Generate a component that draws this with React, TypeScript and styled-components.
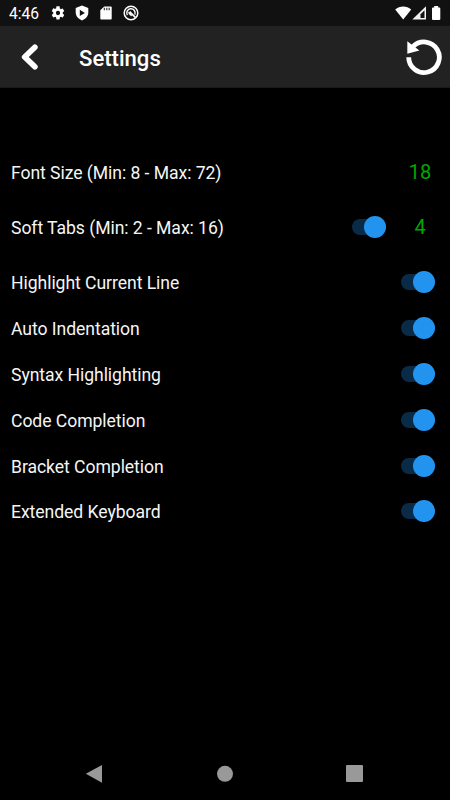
import React, { useState } from "react";
import styled, { createGlobalStyle } from "styled-components";

const GlobalStyle = createGlobalStyle`
  * { box-sizing: border-box; }
  html, body { margin: 0; background: #000; }
  body { font-family: Roboto, "Liberation Sans", sans-serif; overflow: hidden; }
`;

const Screen = styled.div`
  display: flex;
  flex-direction: column;
  width: 450px;
  height: 800px;
  background: #000;
  color: #f5f5f5;
`;

const StatusBar = styled.div`
  display: flex;
  align-items: center;
  height: 26px;
  padding: 0 5px 0 9px;
  background: #111;
  color: #fff;
`;

const Clock = styled.span`
  width: 41px;
  padding-top: 2px;
  font-size: 15.6px;
  line-height: 24px;
`;

const StatusIcons = styled.div`
  display: flex;
  align-items: center;
  gap: 8.2px;
`;

const SystemIcons = styled(StatusIcons)`
  margin-left: auto;
  gap: 0;
`;

const Header = styled.header`
  display: flex;
  align-items: center;
  height: 62px;
  padding: 0 8px 0 20px;
  background: #222;
  border-bottom: 1px solid #1a1a1a;
`;

const IconButton = styled.button`
  display: flex;
  padding: 0;
  border: 0;
  background: none;
  color: #fff;
`;

const Title = styled.h1`
  flex: 1;
  margin: 2px 0 0 39px;
  font-size: 22.1px;
  font-weight: 500;
  line-height: 28px;
  color: #fff;
`;

const SettingsList = styled.main`
  flex: 1;
  padding: 57px 15px 0 11px;
`;

const Row = styled.div<{ $tall?: boolean }>`
  display: flex;
  align-items: center;
  height: ${(p) => (p.$tall ? "55px" : "45.8px")};
  padding-bottom: ${(p) => (p.$tall ? "1px" : "0")};
`;

const SwitchGroup = styled.section`
  padding-top: 4.5px;
`;

const Label = styled.span`
  flex: 1;
  padding-top: 2px;
  font-size: 17.6px;
  line-height: 24px;
  letter-spacing: -0.06px;
`;

const NumberValue = styled.span`
  width: 30px;
  margin-left: 19px;
  text-align: center;
  font-size: 20px;
  line-height: 24px;
  color: #00a800;
`;

const Track = styled.button<{ $on: boolean }>`
  display: flex;
  align-items: center;
  justify-content: ${(p) => (p.$on ? "flex-end" : "flex-start")};
  width: 34px;
  height: 16px;
  padding: 0;
  border: 0;
  border-radius: 8px;
  background: ${(p) => (p.$on ? "#0a2b47" : "#333")};
`;

const Thumb = styled.span<{ $on: boolean }>`
  flex: none;
  width: 22px;
  height: 22px;
  border-radius: 50%;
  background: ${(p) => (p.$on ? "#2294f0" : "#aaa")};
`;

const NavBar = styled.nav`
  display: flex;
  justify-content: space-between;
  height: 53px;
  padding: 13px 86px 0 85px;
`;

function Toggle({ label }: { label: string }) {
  const [on, setOn] = useState(true);
  return (
    <Track $on={on} role="switch" aria-checked={on} aria-label={label} onClick={() => setOn(!on)}>
      <Thumb $on={on} />
    </Track>
  );
}

const GearIcon = () => (
  <svg width="16" height="16" viewBox="0 0 24 24" fill="#fff">
    <path d="M19.14 12.94c.04-.3.06-.61.06-.94s-.02-.64-.07-.94l2.03-1.58a.5.5 0 0 0 .12-.61l-1.92-3.32a.5.5 0 0 0-.59-.22l-2.39.96a7 7 0 0 0-1.62-.94l-.36-2.54A.48.48 0 0 0 13.92 2h-3.84c-.24 0-.43.17-.47.41l-.36 2.54c-.59.24-1.13.57-1.62.94l-2.39-.96a.5.5 0 0 0-.59.22L2.74 8.87c-.12.21-.08.47.12.61l2.03 1.58A6 6 0 0 0 4.8 12c0 .31.02.64.07.94l-2.03 1.58a.5.5 0 0 0-.12.61l1.92 3.32c.12.22.37.29.59.22l2.39-.96c.5.38 1.03.7 1.62.94l.36 2.54c.05.24.24.41.48.41h3.84c.24 0 .44-.17.47-.41l.36-2.54a7 7 0 0 0 1.62-.94l2.39.96c.22.08.47 0 .59-.22l1.92-3.32a.5.5 0 0 0-.12-.61zM12 15.2a3.2 3.2 0 1 1 0-6.4 3.2 3.2 0 0 1 0 6.4z" />
  </svg>
);

const ShieldIcon = () => (
  <svg width="16" height="16" viewBox="0 0 16 16">
    <path d="M8 .6 14.3 3v4.6c0 3.5-2.6 6.6-6.3 7.8-3.7-1.2-6.3-4.3-6.3-7.8V3Z" fill="#fff" />
    <path d="M5.8 4.8v6.2L10.9 7.9Z" fill="#111" />
  </svg>
);

const SdCardIcon = () => (
  <svg width="16" height="16" viewBox="0 0 16 16">
    <path d="M6.2 1.4h6.3c.7 0 1.2.5 1.2 1.2v10.8c0 .7-.5 1.2-1.2 1.2h-9c-.7 0-1.2-.5-1.2-1.2V5.3Z" fill="#fff" />
    <path d="M6.4 2.8v2.4M8.8 2.8v2.4M11.2 2.8v2.4" stroke="#444" strokeWidth="1.3" />
  </svg>
);

const AntennaIcon = () => (
  <svg width="16" height="16" viewBox="0 0 16 16" fill="none" stroke="#fff">
    <circle cx="8" cy="8" r="6.8" strokeWidth="1.5" />
    <path d="M4.4 10.2A4.2 4.2 0 1 1 11.8 9.6" strokeWidth="1.4" />
    <path d="m6.6 6.6 5.7 5.8" strokeWidth="1.6" />
    <path d="M5.5 7.1c0 2 1.4 3.7 3.5 3.8L7.6 8Z" fill="#fff" strokeWidth=".5" />
  </svg>
);

const WifiIcon = () => (
  <svg width="17" height="16" viewBox="0 0 17 16">
    <path d="M.2 4.4C4.6.4 11.8.4 16.2 4.4L8.2 14.6Z" fill="#fff" />
  </svg>
);

const SignalIcon = () => (
  <svg width="16" height="16" viewBox="0 0 16 16">
    <path d="M14 1.2v13.4H.3Z" fill="#f2f2f2" />
    <path d="M12.5 5.2v7.9H8.5V9.3Z" fill="#111" />
  </svg>
);

const BatteryIcon = () => (
  <svg width="17" height="16" viewBox="0 0 17 16">
    <path d="M6.2 1h4v1.5h1.2c.5 0 .9.4.9.9v10.7c0 .5-.4.9-.9.9H4.9c-.5 0-.9-.4-.9-.9V3.4c0-.5.4-.9.9-.9h1.3Z" fill="#fff" />
  </svg>
);

const BackIcon = () => (
  <svg width="20" height="28" viewBox="0 0 20 28">
    <path d="M15.6 3.4 5 14 15.6 24.6" fill="none" stroke="#fff" strokeWidth="4.8" />
    <path d="M14.9 4.2 4.7 14 14.9 23.8" fill="none" stroke="#fff" strokeWidth="5.6" strokeLinecap="round" strokeLinejoin="round" />
  </svg>
);

const ResetIcon = () => (
  <svg width="38" height="38" viewBox="0 0 38 38">
    <path d="M4.7 19.2A15.3 15.3 0 1 0 9 8.6" fill="none" stroke="#fff" strokeWidth="4.8" />
    <path d="M3.3 3.2v12.6l12.1-3.3Z" fill="#fff" />
  </svg>
);

const SWITCH_SETTINGS = [
  "Highlight Current Line",
  "Auto Indentation",
  "Syntax Highlighting",
  "Code Completion",
  "Bracket Completion",
  "Extended Keyboard",
];

export default function App() {
  return (
    <>
      <GlobalStyle />
      <Screen>
        <StatusBar>
          <Clock>4:46</Clock>
          <StatusIcons>
            <GearIcon />
            <ShieldIcon />
            <SdCardIcon />
            <AntennaIcon />
          </StatusIcons>
          <SystemIcons>
            <WifiIcon />
            <SignalIcon />
            <BatteryIcon />
          </SystemIcons>
        </StatusBar>
        <Header>
          <IconButton aria-label="Back"><BackIcon /></IconButton>
          <Title>Settings</Title>
          <IconButton aria-label="Reset"><ResetIcon /></IconButton>
        </Header>
        <SettingsList>
          <Row $tall>
            <Label>Font Size (Min: 8 - Max: 72)</Label>
            <NumberValue>18</NumberValue>
          </Row>
          <Row $tall>
            <Label>Soft Tabs (Min: 2 - Max: 16)</Label>
            <Toggle label="Soft Tabs" />
            <NumberValue>4</NumberValue>
          </Row>
          <SwitchGroup>
            {SWITCH_SETTINGS.map((name) => (
              <Row key={name}>
                <Label>{name}</Label>
                <Toggle label={name} />
              </Row>
            ))}
          </SwitchGroup>
        </SettingsList>
        <NavBar>
          <svg width="18" height="28" viewBox="0 0 18 28"><path d="M17 5v17.7L.8 13.8Z" fill="#999" /></svg>
          <svg width="18" height="28" viewBox="0 0 18 28"><circle cx="9" cy="13.8" r="8" fill="#999" /></svg>
          <svg width="18" height="28" viewBox="0 0 18 28"><rect x="0" y="5" width="17" height="17" rx="1" fill="#999" /></svg>
        </NavBar>
      </Screen>
    </>
  );
}
